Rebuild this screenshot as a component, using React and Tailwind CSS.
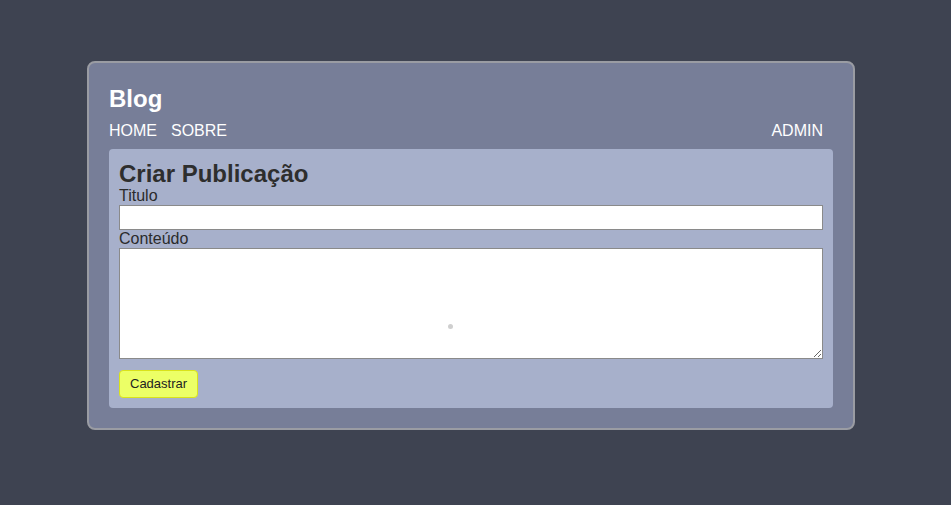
import React from "react";

export default function App() {
  return (
    <div className="min-h-[505px] bg-[#3e4351] pt-[61px] font-['Liberation_Sans',Arial,sans-serif]">
      <div className="ml-[87px] w-[768px] rounded-lg border-2 border-[#9a9ca3] bg-[#777e98] px-[20px] pt-[21px] pb-[20px]">
        <h1 className="text-[24px] font-bold leading-[30px] text-white">Blog</h1>
        <nav className="mt-[8px] flex items-center text-[16px] leading-[18px] text-white">
          <a className="mr-[14px]">HOME</a>
          <a>SOBRE</a>
          <a className="ml-auto mr-[10px]">ADMIN</a>
        </nav>
        <div className="mt-[9px] rounded bg-[#a7b0cb] px-[10px] pt-[12px] pb-[10px] text-[#2b2b2b]">
          <h2 className="text-[24px] font-bold leading-[26px] text-[#2e2e2e]">Criar Publicação</h2>
          <label className="block text-[16px] leading-[18px]">Titulo</label>
          <input className="block h-[25px] w-full border border-[#8a8a8a] bg-white" />
          <label className="block text-[16px] leading-[18px]">Conteúdo</label>
          <div className="relative">
            <textarea className="block h-[111px] w-full resize border border-[#8a8a8a] bg-white" />
            <span className="absolute left-[329px] top-[76px] h-[5px] w-[5px] rounded-full bg-[#cfcfcf]" />
          </div>
          <button className="mt-[11px] h-[28px] rounded border border-[#d9e21a] bg-[#ecff66] px-[10px] text-[13px] text-[#222]">
            Cadastrar
          </button>
        </div>
      </div>
    </div>
  );
}
